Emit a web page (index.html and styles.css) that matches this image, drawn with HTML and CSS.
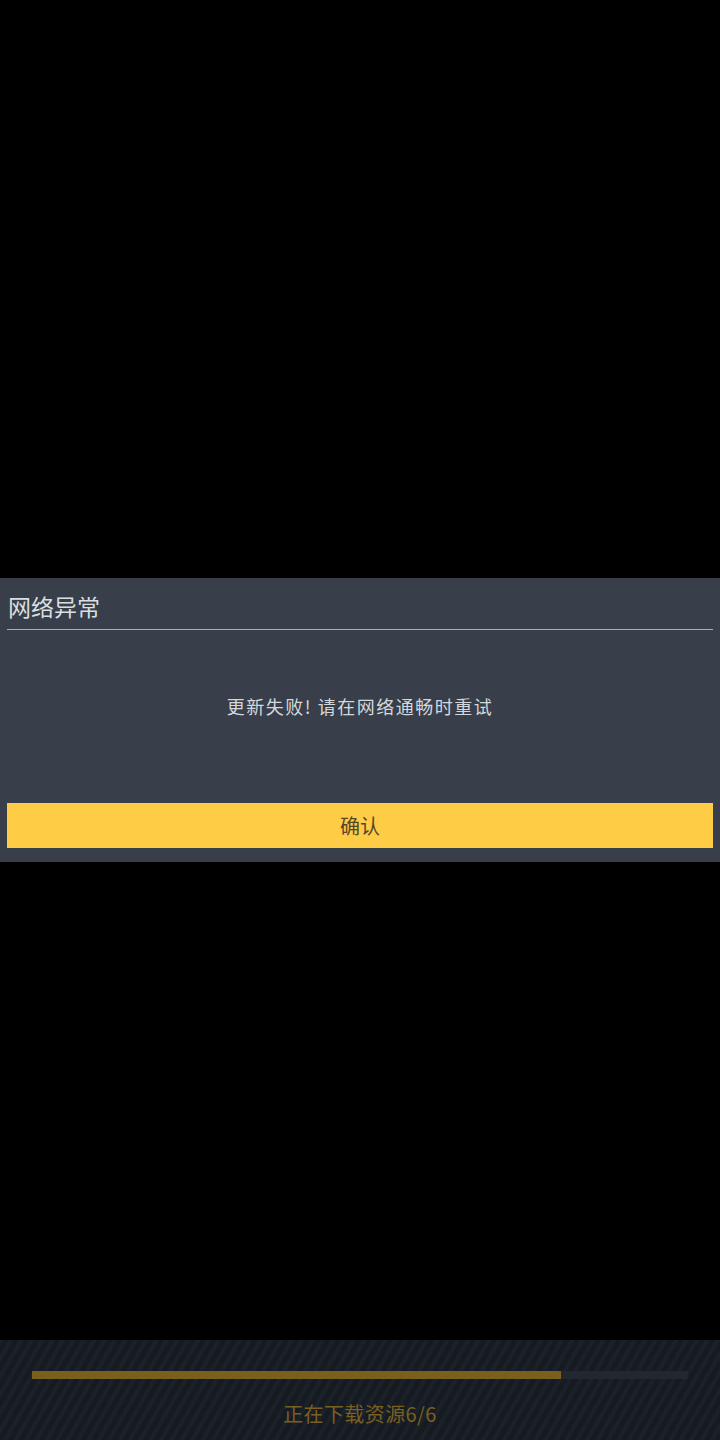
FILE: index.html
```html
<!DOCTYPE html>
<html lang="zh">
<head>
<meta charset="utf-8">
<link rel="stylesheet" href="styles.css">
</head>
<body>
<div class="screen">
  <div class="spacer-top"></div>
  <div class="dialog">
    <div class="dialog-title">网络异常</div>
    <div class="dialog-rule"></div>
    <div class="dialog-message">更新失败! 请在网络通畅时重试</div>
    <div class="dialog-button">确认</div>
  </div>
  <div class="spacer-mid"></div>
  <div class="loader">
    <div class="progress"><div class="progress-fill" style="width:80.6%"></div></div>
    <div class="loader-text">正在下载资源6/6</div>
  </div>
</div>
</body>
</html>
```
FILE: styles.css
```css
html, body {
  margin: 0;
  padding: 0;
  background: #000;
}
.screen {
  width: 720px;
  height: 1440px;
  display: flex;
  flex-direction: column;
  font-family: "Noto Sans CJK SC", "Noto Sans", sans-serif;
}
.spacer-top {
  height: 578px;
  flex: none;
}
.dialog {
  height: 284px;
  flex: none;
  background: #383e4a;
  display: flex;
  flex-direction: column;
  padding: 0 7px;
  box-sizing: border-box;
}
.dialog-title {
  margin-top: 13px;
  padding-left: 1px;
  height: 30px;
  line-height: 30px;
  font-size: 23px;
  color: #d8dfe0;
}
.dialog-rule {
  margin-top: 8px;
  height: 1px;
  background: #a9b0b4;
}
.dialog-message {
  margin-top: 62px;
  height: 28px;
  line-height: 28px;
  text-align: center;
  font-size: 18px;
  color: #d3d9db;
  letter-spacing: 1.5px;
}
.dialog-button {
  margin-top: 83px;
  height: 45px;
  line-height: 45px;
  background: #ffcc45;
  color: #55462a;
  text-align: center;
  font-size: 20px;
}
.spacer-mid {
  flex: 1;
}
.loader {
  height: 100px;
  flex: none;
  background-color: #161b21;
  background-image: repeating-linear-gradient(
    -60deg,
    #161b21 0px,
    #161b21 5px,
    #1b2128 5px,
    #1b2128 9px
  );
  padding: 31px 32px 0;
  box-sizing: border-box;
  display: flex;
  flex-direction: column;
}
.progress {
  height: 8px;
  background: #23272f;
}
.progress-fill {
  height: 100%;
  background: #7b5f1d;
}
.loader-text {
  margin-top: 21px;
  text-align: center;
  font-size: 20px;
  line-height: 28px;
  letter-spacing: 0.4px;
  color: #7a5f22;
  font-family: "Noto Sans CJK SC", "Noto Sans", sans-serif;
}
```
